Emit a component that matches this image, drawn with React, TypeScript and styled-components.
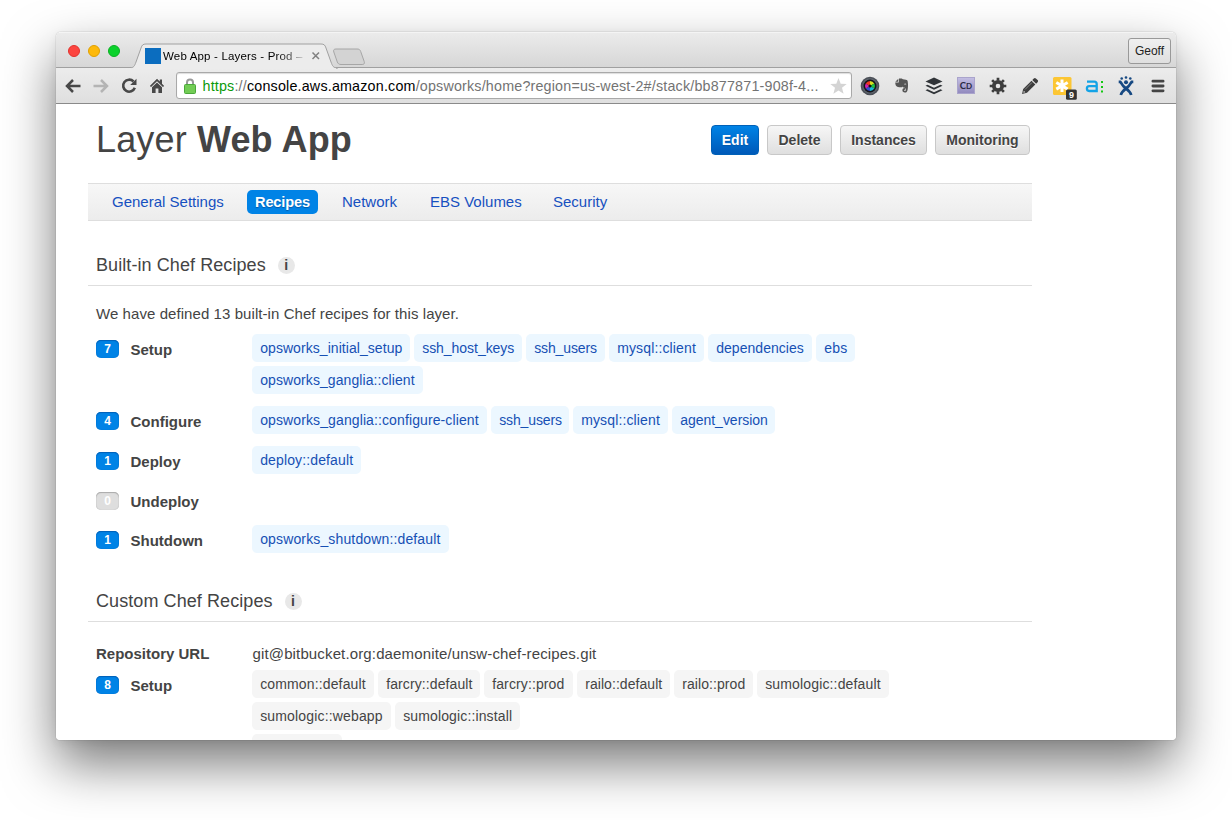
import React from "react";
import styled, { createGlobalStyle } from "styled-components";

const GlobalStyle = createGlobalStyle`
  * { box-sizing: border-box; }
  html, body { margin: 0; background: #fff; }
  body { font-family: "Liberation Sans", Arial, sans-serif; color: #444; overflow: hidden; }
`;

const Desktop = styled.div`
  width: 1232px;
  height: 820px;
  padding: 32px 56px 80px;
  overflow: hidden;
`;
const Window = styled.div`
  width: 1120px;
  height: 708px;
  display: flex;
  flex-direction: column;
  border-radius: 5px 5px 4px 4px;
  box-shadow: 0 0 1px rgba(0, 0, 0, 0.5), 0 24px 52px rgba(0, 0, 0, 0.53), 0 3px 10px rgba(0, 0, 0, 0.06);
`;
const Clip = styled.div`
  flex: 1;
  display: flex;
  flex-direction: column;
  overflow: hidden;
  border-radius: inherit;
  background: #fff;
`;
const TitleBar = styled.header`
  height: 36px;
  flex: none;
  display: flex;
  background: linear-gradient(#ebebeb, #d6d6d6);
  border-top: 1px solid #f4f4f4;
  box-shadow: inset 0 -1px #a0a0a0;
`;
const Lights = styled.div`
  display: flex;
  gap: 8px;
  padding: 12px 0 0 12px;
  width: 75px;
`;
const Light = styled.i<{ $c: string; $b: string }>`
  width: 12px;
  height: 12px;
  border-radius: 50%;
  background: ${(p) => p.$c};
  border: 1px solid ${(p) => p.$b};
`;
const TabArea = styled.div`
  position: relative;
  width: 240px;
  height: 35px;
`;
const TabShape = styled.svg`
  position: absolute;
  left: 0;
  top: 0;
`;
const TabContent = styled.div`
  position: relative;
  display: flex;
  align-items: center;
  height: 24px;
  margin: 11px 0 0 14px;
`;
const Favicon = styled.i`
  width: 16px;
  height: 16px;
  margin-right: 2px;
  background: #0b6dbf;
`;
const TabTitle = styled.span`
  width: 143px;
  white-space: nowrap;
  font-size: 11.5px;
  line-height: 16px;
  letter-spacing: 0.17px;
  color: transparent;
  background: linear-gradient(90deg, #000 112px, #555 128px, #ccc 142px);
  background-clip: text;
  -webkit-background-clip: text;
`;
const User = styled.button`
  width: 43px;
  height: 26px;
  margin: 5px 5px 0 auto;
  padding: 0;
  border: 1px solid #999;
  border-radius: 3px;
  background: linear-gradient(#f0f0f0, #dfdfdf);
  font: 12px "Liberation Sans", sans-serif;
  color: #222;
`;
const Toolbar = styled.nav`
  height: 36px;
  flex: none;
  display: flex;
  align-items: center;
  padding-left: 3px;
  background: linear-gradient(#ececec, #dfdfdf);
  border-bottom: 1px solid #8a8a8a;
`;
const ToolCell = styled.span<{ $w: number }>`
  width: ${(p) => p.$w}px;
  height: 24px;
  display: flex;
  align-items: center;
  justify-content: center;
`;
const Omnibox = styled.div`
  width: 676px;
  height: 27px;
  margin-left: 5px;
  margin-right: 2px;
  padding: 0 4px 0 7px;
  display: flex;
  align-items: center;
  border: 1px solid #a9a9a9;
  border-radius: 3px;
  background: #fff;
  box-shadow: inset 0 1px 1px #ddd;
`;
const Url = styled.span`
  flex: 1;
  margin-left: 6.5px;
  font-size: 14.3px;
  line-height: 18px;
  letter-spacing: 0.19px;
  white-space: nowrap;
  color: #737373;
  em { font-style: normal; color: #0a9a0a; }
  b { font-weight: normal; color: #000; }
`;

const Page = styled.main`
  flex: 1;
  width: 976px;
  padding: 0 0 0 32px;
  overflow: hidden;
`;
const PageHead = styled.div`
  height: 79px;
  padding: 0 2px 0 8px;
  display: flex;
  justify-content: space-between;
`;
const Title = styled.h1`
  margin: 13px 0 0;
  font-size: 36px;
  line-height: 46px;
  font-weight: normal;
  letter-spacing: 0.15px;
  color: #444;
  white-space: nowrap;
`;
const Actions = styled.div`
  display: flex;
  gap: 8px;
  padding-top: 21px;
`;
const Button = styled.button<{ $w: number; $primary?: boolean }>`
  width: ${(p) => p.$w}px;
  height: 30px;
  padding: 0;
  border-radius: 4px;
  border: 1px solid ${(p) => (p.$primary ? "#0061b8" : "#c8c8c8")};
  background: ${(p) => (p.$primary ? "linear-gradient(#0083e6, #0059b8)" : "linear-gradient(#f6f6f6, #dfdfdf)")};
  color: ${(p) => (p.$primary ? "#fff" : "#444")};
  text-shadow: ${(p) => (p.$primary ? "0 1px 1px #0059a8" : "0 1px #fff")};
  font: bold 14px "Liberation Sans", sans-serif;
  white-space: nowrap;
`;
const Tabs = styled.nav`
  width: 944px;
  height: 38px;
  padding: 6px 0 0 16px;
  display: flex;
  gap: 16px;
  border-top: 1px solid #dedede;
  border-bottom: 1px solid #dedede;
  background: linear-gradient(#f7f7f7, #ececec);
`;
const Tab = styled.a<{ $w: number; $active?: boolean }>`
  width: ${(p) => p.$w}px;
  height: 24px;
  padding-left: 8px;
  border-radius: 5px;
  line-height: 24px;
  white-space: nowrap;
  font-size: ${(p) => (p.$active ? 14.6 : 15)}px;
  font-weight: ${(p) => (p.$active ? "bold" : "normal")};
  letter-spacing: ${(p) => (p.$active ? "-0.15px" : "0")};
  color: ${(p) => (p.$active ? "#fff" : "#1650c0")};
  background: ${(p) => (p.$active ? "#0083e6" : "none")};
  text-shadow: ${(p) => (p.$active ? "0 1px 1px #0059a8" : "none")};
`;
const SectionHead = styled.h2<{ $mt: number }>`
  width: 944px;
  height: 41px;
  margin: ${(p) => p.$mt}px 0 0;
  padding: 0 0 0 8px;
  display: flex;
  gap: 12px;
  border-bottom: 1px solid #dedede;
  font-size: 18px;
  line-height: 40px;
  font-weight: normal;
  letter-spacing: 0.08px;
`;
const Info = styled.i`
  width: 17px;
  height: 17px;
  margin-top: 12px;
  border-radius: 50%;
  background: #e8e8e8;
  font: bold 14px/17px "Liberation Sans", sans-serif;
  text-align: center;
`;
const Lead = styled.p`
  margin: 18px 0 10px 8px;
  font-size: 15px;
  line-height: 20px;
  letter-spacing: 0.07px;
  white-space: nowrap;
`;
const Repo = styled.div`
  display: flex;
  margin: 22px 0 6px 8px;
  font-size: 15px;
  line-height: 20px;
  letter-spacing: 0.14px;
  b { width: 156.5px; letter-spacing: 0; }
`;
const Row = styled.div<{ $h: number }>`
  display: flex;
  height: ${(p) => p.$h}px;
  padding-left: 8px;
`;
const Badge = styled.span<{ $off?: boolean }>`
  width: 23px;
  height: 18px;
  margin: 6px 11.5px 0 0;
  border-radius: 5px;
  background: ${(p) => (p.$off ? "#dedede" : "#0083e6")};
  box-shadow: inset 0 1px 1px ${(p) => (p.$off ? "#aaa" : "#0061b8")}, inset 0 0 1px ${(p) => (p.$off ? "#aaa" : "#0061b8")};
  color: #fff;
  text-align: center;
  font-size: 12px;
  line-height: 18px;
  font-weight: bold;
`;
const Label = styled.b`
  width: 121.5px;
  margin-top: 6px;
  font-size: 15px;
  line-height: 20px;
`;
const ChipLines = styled.div`
  display: flex;
  flex-direction: column;
  gap: 4px;
`;
const ChipLine = styled.div`
  display: flex;
  gap: 4px;
`;
const Chip = styled.span<{ $w: number; $ls: number; $gray?: boolean }>`
  width: ${(p) => p.$w}px;
  height: 28px;
  padding-left: 8.2px;
  border-radius: 5px;
  white-space: nowrap;
  font-size: 14px;
  line-height: 28px;
  letter-spacing: ${(p) => p.$ls}px;
  color: ${(p) => (p.$gray ? "#444" : "#1650b4")};
  background: ${(p) => (p.$gray ? "#f5f5f5" : "#ecf7ff")};
`;

type ChipData = [name: string, width: number, spacing: number];
type Recipe = { n: number; label: string; h: number; lines: ChipData[][] };

const builtIn: Recipe[] = [
  {
    n: 7, label: "Setup", h: 72,
    lines: [
      [["opsworks_initial_setup", 158, 0.06], ["ssh_host_keys", 108, -0.04], ["ssh_users", 79, -0.12], ["mysql::client", 95, 0.13], ["dependencies", 104, 0.04], ["ebs", 39, 0.2]],
      [["opsworks_ganglia::client", 171, 0.08]],
    ],
  },
  {
    n: 4, label: "Configure", h: 40,
    lines: [[["opsworks_ganglia::configure-client", 235, 0.11], ["ssh_users", 78, -0.12], ["mysql::client", 95, 0.13], ["agent_version", 103, -0.02]]],
  },
  { n: 1, label: "Deploy", h: 40, lines: [[["deploy::default", 109, 0.13]]] },
  { n: 0, label: "Undeploy", h: 39, lines: [] },
  { n: 1, label: "Shutdown", h: 40, lines: [[["opsworks_shutdown::default", 197, 0.14]]] },
];
const custom: Recipe[] = [
  {
    n: 8, label: "Setup", h: 104,
    lines: [
      [["common::default", 122, 0.14], ["farcry::default", 102, 0.1], ["farcry::prod", 89, 0.12], ["railo::default", 93, 0.06], ["railo::prod", 79, 0.08], ["sumologic::default", 132, 0.15]],
      [["sumologic::webapp", 139, 0.16], ["sumologic::install", 125, 0.13]],
      [["", 90, 0]],
    ],
  },
];

const RecipeRow = ({ r, gray }: { r: Recipe; gray?: boolean }) => (
  <Row $h={r.h}>
    <Badge $off={r.n === 0}>{r.n}</Badge>
    <Label>{r.label}</Label>
    <ChipLines>
      {r.lines.map((line, i) => (
        <ChipLine key={i}>
          {line.map(([name, w, ls]) => (
            <Chip key={name} $w={w} $ls={ls} $gray={gray}>{name}</Chip>
          ))}
        </ChipLine>
      ))}
    </ChipLines>
  </Row>
);

const Extensions = () => (
  <>
    <ToolCell $w={32}>
      <svg width="20" height="20" viewBox="0 0 20 20">
        <circle cx="10" cy="10" r="9.3" fill="#4b4f57" />
        <circle cx="10" cy="10" r="7.8" fill="#5d636c" />
        <circle cx="10" cy="10" r="6.5" fill="#15151b" />
        <path d="M10 10V5a5 5 0 0 1 4.3 2.5z" fill="#d8e020" />
        <path d="M10 10l4.3-2.5a5 5 0 0 1 0 5z" fill="#20c040" />
        <path d="M10 10l4.3 2.5A5 5 0 0 1 10 15z" fill="#18b8d8" />
        <path d="M10 10v5a5 5 0 0 1-4.300-2.500z" fill="#3050d0" />
        <path d="M10 10l-4.300 2.500a5 5 0 0 1 0-5z" fill="#d020b0" />
        <path d="M10 10L5.700 7.500A5 5 0 0 1 10 5z" fill="#f03820" />
        <circle cx="10" cy="10" r="1.500" fill="#111" />
      </svg>
    </ToolCell>
    <ToolCell $w={32}>
      <svg width="14" height="15" viewBox="0 0 14 15">
        <path d="M.3 3.700L3.300.7v3z" fill="#555" />
        <path d="M4 .5h2.200c.8 0 1.100.6 1.700.8l3 .4c1.200.2 1.600.7 1.800 1.800.4 2.500.5 5.500-.1 8.400-.4 1.700-1.200 2.600-2.700 2.600-1.700 0-2.500-.9-2.500-2.200 0-1.300.9-2.200 2.300-2.200h.7v1.600h-.7c-.5 0-.7.2-.7.500 0 .4.300.6.900.6.9 0 1.100-.6 1.100-1.600 0-1.300-1-1.400-2-1.500-.8-.1-1.100-.5-1.200-1.200-.5.8-1.300 1-2.400.8C2 9.100.5 8.600.2 4.500H3c.7 0 1-.3 1-1z" fill="#555" />
        <path d="M9.400 6.200c.7-.3 1.200-.2 1.700.2" fill="none" stroke="#ddd" strokeWidth=".9" />
      </svg>
    </ToolCell>
    <ToolCell $w={32}>
      <svg width="18" height="18" viewBox="0 0 18 18" fill="#303438">
        <path d="M9 .5l8.500 3.900L9 8.300.5 4.400z" />
        <path d="M.5 8.700l2-.9L9 10.800l6.500-3 2 .9L9 12.700z" />
        <path d="M.5 13.200l2-.9L9 15.300l6.500-3 2 .9L9 17.200z" />
      </svg>
    </ToolCell>
    <ToolCell $w={32}>
      <svg width="18" height="18" viewBox="0 0 18 18">
        <defs>
          <linearGradient id="cd" x2="0" y2="1">
            <stop stopColor="#c4bfe4" />
            <stop offset="1" stopColor="#9088bd" />
          </linearGradient>
        </defs>
        <rect x=".5" y=".5" width="17" height="16" fill="url(#cd)" stroke="#aaa4cc" />
        <text x="9" y="11.500" textAnchor="middle" fontSize="9.500" fontFamily="Lato, sans-serif" fontWeight="bold" fill="#292742">C<tspan fontSize="8">D</tspan></text>
      </svg>
    </ToolCell>
    <ToolCell $w={32}>
      <svg width="18" height="18" viewBox="0 0 18 18" stroke="#3d3d3d" fill="none">
        <circle cx="9" cy="9" r="4.200" strokeWidth="3.800" />
        {[0, 45, 90, 135, 180, 225, 270, 315].map((a) => (
          <path key={a} d="M9 3.500V.7" strokeWidth="2.700" transform={`rotate(${a} 9 9)`} />
        ))}
      </svg>
    </ToolCell>
    <ToolCell $w={32}>
      <svg width="18" height="18" viewBox="0 0 18 18" fill="#3d3d3d">
        <path d="M1 17l1.200-5L10.500 3.700l3.800 3.800L6 15.800z" />
        <path d="M11.300 2.900l1.500-1.500c.7-.7 1.400-.7 2.100 0l1.700 1.700c.7.700.7 1.400 0 2.100l-1.500 1.500z" />
        <path d="M4 12.500l7-7" stroke="#999" strokeWidth=".8" />
        <path d="M2.300 15.700l.5-2 1.500 1.500z" fill="#ddd" />
      </svg>
    </ToolCell>
    <ToolCell $w={32}>
      <svg width="32" height="29" viewBox="0 0 32 29">
        <rect x="7" y="6" width="18.500" height="18" rx="1.500" fill="#fcc634" />
        <path d="M16 8.500v12.600M10.300 11.500l11.400 6.600M21.700 11.500l-11.400 6.600" stroke="#fff" strokeWidth="3" />
        <rect x="20" y="18.500" width="10.800" height="10.300" rx="1.500" fill="#333" />
        <text x="25.400" y="27" textAnchor="middle" fontFamily="Liberation Sans, sans-serif" fontWeight="bold" fontSize="9" fill="#fff">9</text>
      </svg>
    </ToolCell>
    <ToolCell $w={32}>
      <svg width="20" height="18" viewBox="0 0 20 18" fill="none">
        <path d="M3 4.700h7.200c1.700 0 2.500.8 2.500 2.400V14H5.200c-1.600 0-2.300-.8-2.300-2.400s.7-2.400 2.300-2.400h7.500" stroke="#14a3e6" strokeWidth="2.300" />
        <path d="M18 4v2m0 3v2m0 2.500v2" stroke="#12c812" strokeWidth="2" />
      </svg>
    </ToolCell>
    <ToolCell $w={32}>
      <svg width="18" height="20" viewBox="0 0 18 20" fill="#174982">
        <circle cx="4.700" cy="2.500" r="1.300" />
        <circle cx="9" cy="1.500" r="1.300" />
        <circle cx="13.300" cy="2.500" r="1.300" />
        <circle cx="9" cy="6.200" r="2" />
        <g fill="none" stroke="#174982" strokeWidth="2.700">
          <path d="M1.700 5.800h1.500c1.300 1.200 1.800 3 3.300 4.500 2.500 2.500 6.500 4.200 7.700 8.700" />
          <path d="M16.300 5.800h-1.500c-1.300 1.200-1.800 3-3.300 4.500C9 12.800 5 14.500 3.800 19" />
        </g>
      </svg>
    </ToolCell>
    <ToolCell $w={32}>
      <svg width="14" height="14" viewBox="0 0 14 14" stroke="#444" strokeWidth="2.800" strokeLinecap="round">
        <path d="M1.900 2.200h10.200M1.900 7h10.200M1.900 11.800h10.200" />
      </svg>
    </ToolCell>
  </>
);

const NavIcons = () => (
  <>
    <ToolCell $w={28}>
      <svg width="16" height="14" viewBox="0 0 16 14" fill="none" stroke="#484848" strokeWidth="2.500">
        <path d="M15.500 7H2.500M8 1L2 7l6 6" />
      </svg>
    </ToolCell>
    <ToolCell $w={28}>
      <svg width="16" height="14" viewBox="0 0 16 14" fill="none" stroke="#b4b4b4" strokeWidth="2.500">
        <path d="M.5 7h13M8 1l6 6-6 6" />
      </svg>
    </ToolCell>
    <ToolCell $w={28}>
      <svg width="16" height="16" viewBox="0 0 16 16">
        <path d="M12.500 3.500a6 6 0 1 0 1.300 6.300" fill="none" stroke="#484848" strokeWidth="2.600" />
        <path d="M15.500 .7V7H9.200z" fill="#484848" />
      </svg>
    </ToolCell>
    <ToolCell $w={28}>
      <svg width="16" height="16" viewBox="0 0 16 16" fill="#484848">
        <path d="M8 .8L.8 8l1.300 1L8 3.200 13.900 9l1.300-1-2.200-2.200V1.500h-2.200v2z" />
        <path d="M8 4.500L3 9.300V15h3.600v-4.500h2.800V15H13V9.300z" />
      </svg>
    </ToolCell>
  </>
);

export default function App() {
  return (
    <Desktop>
      <GlobalStyle />
      <Window>
        <Clip>
          <TitleBar>
            <Lights>
              <Light $c="#fc4540" $b="#e2322d" />
              <Light $c="#fdb90b" $b="#e0a000" />
              <Light $c="#0bd22c" $b="#0bb023" />
            </Lights>
            <TabArea>
              <TabShape width="240" height="36" viewBox="0 0 240 36">
                <path d="M-1 35C3 34.500 3.500 33 5 29l5-14c1-3 2-4 5-4H190c3 0 4 1 5 4l5 14c1.500 4 2 5.500 6 6V37H-1z" fill="#ececec" stroke="#a0a0a0" />
                <path d="M0 36h205" stroke="#ececec" strokeWidth="1.500" />
                <path d="M205 16h21c2 0 3 .5 3.700 2.500l3.500 10c.7 2-.2 3-2 3H210c-2 0-3-.8-3.700-2.500l-3.500-10c-.7-2 .2-3 2.200-3z" fill="#d3d3d3" stroke="#a6a6a6" />
              </TabShape>
              <TabContent>
                <Favicon />
                <TabTitle>Web App - Layers - Prod –</TabTitle>
                <svg width="16" height="10" viewBox="0 0 16 10" stroke="#808080" strokeWidth="1.500">
                  <path d="M6.500 1.500l6.500 6.500M13 1.500L6.500 8" />
                </svg>
              </TabContent>
            </TabArea>
            <User>Geoff</User>
          </TitleBar>
          <Toolbar>
            <NavIcons />
            <Omnibox>
              <svg width="12" height="16" viewBox="0 0 12 16">
                <path d="M3 8V4.500a3 3 0 0 1 6 0V8" fill="none" stroke="#999" strokeWidth="2" />
                <rect x=".5" y="6.500" width="11" height="9" rx="1" fill="#72cc55" stroke="#4aa83a" />
              </svg>
              <Url><em>https</em>://<b>console.aws.amazon.com</b>/opsworks/home?region=us-west-2#/stack/bb877871-908f-4...</Url>
              <svg width="17" height="16" viewBox="0 0 17 16" fill="#d4d4d4">
                <path d="M8.500 0l2.200 5.700 6 .3-4.700 3.800 1.600 6-5.100-3.400-5.100 3.400 1.600-6L.3 6l6-.3z" />
              </svg>
            </Omnibox>
            <Extensions />
          </Toolbar>
          <Page>
            <PageHead>
              <Title>Layer <b>Web App</b></Title>
              <Actions>
                <Button $w={48} $primary>Edit</Button>
                <Button $w={65}>Delete</Button>
                <Button $w={87}>Instances</Button>
                <Button $w={95}>Monitoring</Button>
              </Actions>
            </PageHead>
            <Tabs>
              <Tab $w={127}>General Settings</Tab>
              <Tab $w={71} $active>Recipes</Tab>
              <Tab $w={72}>Network</Tab>
              <Tab $w={107}>EBS Volumes</Tab>
              <Tab $w={71}>Security</Tab>
            </Tabs>
            <SectionHead $mt={24}>Built-in Chef Recipes <Info>i</Info></SectionHead>
            <Lead>We have defined 13 built-in Chef recipes for this layer.</Lead>
            {builtIn.map((r) => <RecipeRow key={r.label} r={r} />)}
            <SectionHead $mt={16}>Custom Chef Recipes <Info>i</Info></SectionHead>
            <Repo><b>Repository URL</b>git@bitbucket.org:daemonite/unsw-chef-recipes.git</Repo>
            {custom.map((r) => <RecipeRow key={r.label} r={r} gray />)}
          </Page>
        </Clip>
      </Window>
    </Desktop>
  );
}
